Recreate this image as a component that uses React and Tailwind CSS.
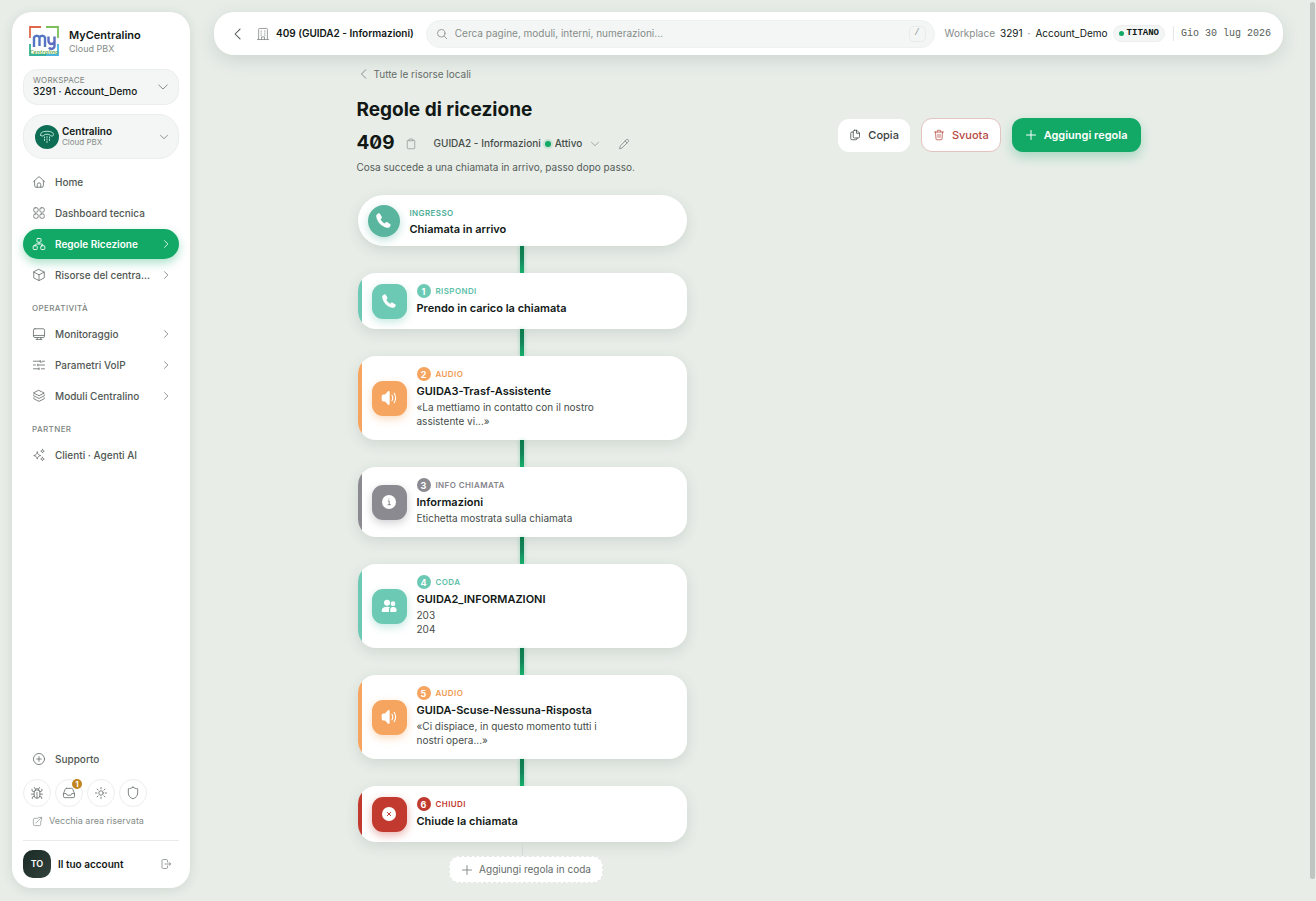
import React from "react";

const paths = {
  home: <><path d="M2.500 11.800 10.600 3.600a2 2 0 0 1 2.800 0l8.100 8.200" /><path d="M4.500 10v8.500A2.500 2.500 0 0 0 7 21h10a2.500 2.500 0 0 0 2.500-2.500V10" /><path d="M9 21v-4.500a3 3 0 0 1 6 0V21" /></>,
  grid: <><rect x="3" y="3" width="7.500" height="7.500" rx="2.500" /><rect x="13.500" y="3" width="7.500" height="7.500" rx="2.500" /><rect x="3" y="13.500" width="7.500" height="7.500" rx="2.500" /><rect x="13.500" y="13.500" width="7.500" height="7.500" rx="2.500" /></>,
  tree: <><rect x="8.500" y="2.500" width="7" height="6.500" rx="1.500" /><rect x="2" y="15" width="7" height="6.500" rx="1.500" /><rect x="15" y="15" width="7" height="6.500" rx="1.500" /><path d="M12 9v3M5.500 15v-1.500A1.500 1.500 0 0 1 7 12h10a1.500 1.500 0 0 1 1.500 1.500V15" /></>,
  cube: <><path d="M12 2.500 21 7v10L12 21.500 3 17V7z" /><path d="M3 7 12 11.700 21 7M12 11.700v9.800" /></>,
  monitor: <><rect x="2.500" y="3" width="19" height="15" rx="2.500" /><path d="M2.500 14.500h19M9 18v3M15 18v3M7 21.300h10" /></>,
  sliders: <><path d="M2.500 5.500H14M18 5.500h3.500M2.500 12H6M10 12h11.500M2.500 18.500H12M16 18.500h5.500" /><path d="M14 4v3h3M10 10.500v3M12 17v3" /></>,
  layers: <><path d="M12 2.500 21 7l-9 4.500L3 7z" /><path d="m3 10 0 1.700 9 4.500 9-4.500V10M3 15v1.700l9 4.500 9-4.500V15" /></>,
  sparkles: <><path d="M9 7c.8 3.800 2.200 5.200 6 6-3.800.8-5.200 2.200-6 6-.8-3.800-2.200-5.200-6-6 3.800-.8 5.200-2.200 6-6z" /><path d="M18 2.500c.4 1.900 1.100 2.600 3 3-1.900.4-2.600 1.100-3 3-.4-1.900-1.100-2.600-3-3 1.900-.4 2.600-1.100 3-3zM18 16c.4 1.900 1.100 2.600 3 3-1.900.4-2.600 1.100-3 3-.4-1.900-1.100-2.600-3-3 1.900-.4 2.600-1.100 3-3z" /></>,
  support: <><circle cx="12" cy="12" r="9.500" /><path d="M12 8v8M8 12h8" /></>,
  bug: <><path d="M7 11.500a5 5 0 0 1 10 0V16a5 5 0 0 1-10 0z" /><path d="M8.500 8a3.500 3.500 0 0 1 7 0M12 11v10M9 5 7.500 2.500M15 5l1.500-2.500M7 10 3.500 8.500V5.500M17 10l3.500-1.500V5.500M7 14H2.500M17 14h4.500M7.500 17.500 4 19v2.500M16.500 17.500 20 19v2.500" /></>,
  inbox: <><path d="M7.500 4h9a2 2 0 0 1 1.900 1.300L21.500 13v4.500a2.500 2.500 0 0 1-2.500 2.500H5a2.500 2.500 0 0 1-2.500-2.500V13l3.100-7.700A2 2 0 0 1 7.500 4z" /><path d="M2.500 13h4.700l1.600 2.800h6.400l1.600-2.800h4.700" /></>,
  sun: <><circle cx="12" cy="12" r="3.800" /><path d="M12 2.500v2.500M12 19v2.500M2.500 12H5M19 12h2.500M5.300 5.300 7 7M17 17l1.700 1.700M18.700 5.300 17 7M7 17l-1.700 1.700" /></>,
  shield: <path d="M12 2c2.300 1.700 5 2.600 8 2.700V12c0 5-3.200 8.300-8 10-4.800-1.700-8-5-8-10V4.700C7 4.600 9.700 3.700 12 2z" />,
  external: <><path d="M13 5H6a3 3 0 0 0-3 3v10a3 3 0 0 0 3 3h10a3 3 0 0 0 3-3v-7M8.500 15.500 21 3M14.500 3H21v6.500" /></>,
  logout: <path d="M15 8V5.500A2.500 2.500 0 0 0 12.500 3h-6A2.500 2.500 0 0 0 4 5.500v13A2.500 2.500 0 0 0 6.500 21h6a2.500 2.500 0 0 0 2.500-2.500V16M10 12h11.500M18.500 9l3 3-3 3" />,
  right: <path d="m8.500 4 8 8-8 8" />,
  left: <path d="m15.500 3.500-8.500 8.500 8.500 8.500" />,
  down: <path d="m3.500 8 8.500 8 8.500-8" />,
  building: <><path d="M4.500 21.500V4A1.500 1.500 0 0 1 6 2.500h12A1.500 1.500 0 0 1 19.500 4v17.500M2.500 21.500h19M9.500 21.500V17h5v4.500" /><path d="M8.500 7h1M14.500 7h1M8.500 10.500h1M14.500 10.500h1M8.500 14h1M14.500 14h1" /></>,
  search: <><circle cx="10.500" cy="10.500" r="7.500" /><path d="m16 16 5.500 5.500" /></>,
  clipboard: <><path d="M8 4.500H6A1.500 1.500 0 0 0 4.500 6v14A1.500 1.500 0 0 0 6 21.500h12a1.500 1.500 0 0 0 1.500-1.500V6A1.500 1.500 0 0 0 18 4.500h-2" /><path d="M8 3.500A1.500 1.500 0 0 1 9.500 2h5A1.500 1.500 0 0 1 16 3.500v2H8z" /></>,
  pencil: <path d="M16.500 3.500a2.500 2.500 0 0 1 4 4L8 20l-5 1.500L4.500 16.500zM14 6l4 4" />,
  copy: <><path d="M11 2.500h4.500L21 8v7.500a2.500 2.500 0 0 1-2.500 2.500h-7.500A2.500 2.500 0 0 1 8.500 15.500V5A2.500 2.500 0 0 1 11 2.500z" /><path d="M15 2.500V8.500h6M8.500 6H6a2.500 2.500 0 0 0-2.500 2.500V19A2.500 2.500 0 0 0 6 21.500h7.500A2.500 2.500 0 0 0 16 19v-1" /></>,
  trash: <path d="M3 6h18M8.500 6V4A1.500 1.500 0 0 1 10 2.500h4A1.500 1.500 0 0 1 15.500 4v2M5 6l1 14a1.600 1.600 0 0 0 1.600 1.500h8.800A1.600 1.600 0 0 0 18 20l1-14M10 10.500V17M14 10.500V17" />,
  plus: <path d="M12 3v18M3 12h18" />,
};

function Icon({ name, className = "size-3.5", sw = 1.5 }) {
  return (
    <svg viewBox="0 0 24 24" fill="none" stroke="currentColor" strokeWidth={sw} strokeLinecap="round" strokeLinejoin="round" className={`shrink-0 ${className}`} aria-hidden="true">
      {paths[name]}
    </svg>
  );
}

function Logo() {
  return (
    <svg viewBox="0 0 30 30" className="size-[30px] shrink-0" fill="none" role="img" aria-label="MyCentralino">
      <path d="M1 12V1H12" stroke="#e0684a" strokeWidth="1.800" />
      <path d="M17 1H29V12" stroke="#7cbf5a" strokeWidth="1.800" />
      <path d="M29 18V29H17" stroke="#48b4dc" strokeWidth="1.800" />
      <path d="M1 18V29H17" stroke="#35b39a" strokeWidth="1.800" />
      <path d="M5 21V11.500a3 3 0 0 1 5.500 0V20M10.500 11.500a3 3 0 0 1 5.500 0V21" stroke="#5474c4" strokeWidth="2.400" />
      <path d="M19.500 10.500V15a3 3 0 0 0 6 0V10.500M25.500 15v5a3 3 0 0 1-5.500 1.500" stroke="#5c6fc0" strokeWidth="2.400" />
      <text x="15" y="28" textAnchor="middle" fontSize="6" fontStyle="italic" fontWeight="600" fill="#56a63c" fontFamily="Open Sans, sans-serif">Centralino</text>
    </svg>
  );
}

function NavRow({ icon, label, arrow, active }) {
  return (
    <a
      href="#"
      aria-current={active ? "page" : undefined}
      className={`flex h-[30px] items-center gap-[9px] rounded-full pr-2 pl-[9px] text-[10px] ${active ? "bg-[#12a866] font-semibold text-white shadow-[0_4px_10px_rgba(18,168,102,0.35)]" : "font-medium text-[#505753]"}`}
    >
      <Icon name={icon} className={active ? "size-3.5 text-white" : "size-3.5 text-[#6f7672]"} />
      <span className="min-w-0 flex-1 whitespace-nowrap">{label}</span>
      {arrow && <Icon name="right" className={active ? "size-2.5" : "size-2.5 text-[#7b827e]"} sw={2} />}
    </a>
  );
}

function SectionLabel({ children }) {
  return <h2 className="px-[9px] pt-[9px] pb-0.5 text-[8px] leading-4 font-medium tracking-wider text-[#7d8480]">{children}</h2>;
}

function RoundButton({ icon, label, badge }) {
  return (
    <button type="button" aria-label={label} className="relative flex size-7 items-center justify-center rounded-full border border-[#eceeed] bg-white text-[#6f7672]">
      <Icon name={icon} />
      {badge && <span className="absolute -top-px right-0 flex size-2.5 items-center justify-center rounded-full bg-[#c08420] text-[8px] leading-none font-bold text-white">{badge}</span>}
    </button>
  );
}

function Sidebar() {
  return (
    <aside className="sticky top-3 flex h-[calc(100vh-25px)] w-[178px] shrink-0 flex-col rounded-[20px] bg-white px-[11px] pt-3.5 pb-2.5 shadow-[0_2px_12px_rgba(30,60,45,0.12)]">
      <div className="flex items-center gap-2.5 pl-1.5">
        <Logo />
        <div>
          <div className="text-[11px] leading-4 font-semibold text-[#111815]">MyCentralino</div>
          <div className="text-[9px] leading-3 text-[#858c88]">Cloud PBX</div>
        </div>
      </div>
      <button type="button" className="mt-[13px] flex h-9 items-center justify-between rounded-[14px] border border-[#eceeed] bg-[#f4f6f5] px-[9px] text-left">
        <span className="pb-0.5">
          <span className="block text-[8px] leading-2.5 tracking-wide text-[#7d8480]">WORKSPACE</span>
          <span className="block text-[10px] leading-3 font-medium text-[#111815]">3291 · Account_Demo</span>
        </span>
        <Icon name="down" className="size-3 text-[#7b827e]" sw={1.8} />
      </button>
      <button type="button" className="mt-[9px] flex h-[45px] items-center rounded-[20px] border border-[#eceeed] bg-[#f4f6f5] pr-[9px] pl-[11px] text-left">
        <svg viewBox="0 0 24 24" className="size-6 shrink-0" fill="none" stroke="#c8efe0" strokeLinecap="round" aria-hidden="true">
          <circle cx="12" cy="12" r="12" fill="#0d6e55" stroke="none" />
          <path d="M5.800 10.500c-.8-1.500 0-4.200 6.200-4.200s7 2.700 6.200 4.200c-.6.900-3.300.6-3.400-.6-.1-.9-5.500-.9-5.600 0-.1 1.200-2.800 1.500-3.400.6z" strokeWidth=".9" />
          <path d="M9.500 12v4M12 11.500V19M14.500 12v4" strokeWidth=".9" strokeDasharray="1 1.500" />
        </svg>
        <span className="ml-[3px] flex-1 pb-0.5">
          <span className="block text-[10px] leading-3 font-semibold text-[#111815]">Centralino</span>
          <span className="block text-[8px] leading-2.5 text-[#858c88]">Cloud PBX</span>
        </span>
        <Icon name="down" className="size-2.5 text-[#7b827e]" sw={2} />
      </button>
      <nav className="mt-2 flex flex-col gap-px">
        <NavRow icon="home" label="Home" />
        <NavRow icon="grid" label="Dashboard tecnica" />
        <NavRow icon="tree" label="Regole Ricezione" arrow active />
        <NavRow icon="cube" label="Risorse del centra..." arrow />
        <SectionLabel>OPERATIVITÀ</SectionLabel>
        <NavRow icon="monitor" label="Monitoraggio" arrow />
        <NavRow icon="sliders" label="Parametri VoIP" arrow />
        <NavRow icon="layers" label="Moduli Centralino" arrow />
        <SectionLabel>PARTNER</SectionLabel>
        <NavRow icon="sparkles" label="Clienti · Agenti AI" />
      </nav>
      <div className="mt-auto">
        <NavRow icon="support" label="Supporto" />
        <div className="mt-[5px] flex gap-1">
          <RoundButton icon="bug" label="Segnala un problema" />
          <RoundButton icon="inbox" label="Notifiche" badge="1" />
          <RoundButton icon="sun" label="Tema" />
          <RoundButton icon="shield" label="Sicurezza" />
        </div>
        <a href="#" className="mt-1.5 flex items-center gap-1.5 pl-[9px] text-[9px] leading-4 text-[#858c88]">
          <Icon name="external" className="size-[11px]" />
          Vecchia area riservata
        </a>
        <div className="mt-[11px] flex items-center gap-[7px] border-t border-[#e9ebea] pt-[9px]">
          <span className="flex size-7 items-center justify-center rounded-[10px] bg-linear-to-br from-[#1a2a24] to-[#33423c] text-[9px] font-semibold text-white">TO</span>
          <span className="flex-1 text-[10px] font-semibold text-[#111815]">Il tuo account</span>
          <button type="button" aria-label="Esci" className="pr-[7px] text-[#7b827e]"><Icon name="logout" className="size-3" /></button>
        </div>
      </div>
    </aside>
  );
}

function TopBar() {
  return (
    <header className="flex h-[43px] items-center rounded-[20px] bg-white pr-3 pl-[17px] text-[10px] shadow-[0_5px_18px_rgba(30,60,45,0.13)]">
      <button type="button" aria-label="Indietro" className="text-[#4d5450]"><Icon name="left" className="size-3.5" sw={1.8} /></button>
      <Icon name="building" className="ml-[11px] size-3.5 text-[#7b827e]" sw={1.3} />
      <span className="ml-1.5 text-[10px] font-semibold whitespace-nowrap text-[#111815]">409 (GUIDA2 - Informazioni)</span>
      <label className="ml-3 flex h-7 min-w-0 flex-1 items-center rounded-[14px] border border-[#eff1f0] bg-[#f4f6f5] pr-2 pl-[9px]">
        <Icon name="search" className="size-3 text-[#7b827e]" />
        <input type="search" aria-label="Cerca" placeholder="Cerca pagine, moduli, interni, numerazioni..." className="ml-[7px] min-w-0 flex-1 bg-transparent text-[10px] outline-none placeholder:text-[#858c88]" />
        <kbd className="flex h-4 w-[17px] items-center justify-center rounded-[5px] border border-[#e9ebea] font-['Liberation_Mono',monospace] text-[9px] text-[#8f9692]">/</kbd>
      </label>
      <div className="ml-2.5 flex items-center whitespace-nowrap text-[#111815]">
        <span className="text-[#858c88]">Workplace</span>
        <span className="ml-[5px]">3291</span>
        <span className="mx-[5px] text-[#858c88]">·</span>
        <span>Account_Demo</span>
        <span className="ml-[5px] flex h-[17px] items-center gap-[3px] rounded-full border border-[#eceeed] bg-[#f4f6f5] px-[5px] font-['Liberation_Mono',monospace] text-[9px] font-bold">
          <span className="size-[5px] rounded-full bg-[#12a866]" />TITANO
        </span>
        <time className="ml-2 border-l border-[#e4e7e5] pl-[7px] font-['Liberation_Mono',monospace] text-[10px] text-[#555c58]">Gio 30 lug 2026</time>
      </div>
    </header>
  );
}

const glyphs = {
  phone: <path fill="currentColor" d="M7.200 2.800c-.6-.9-1.700-1.200-2.600-.6L3 3.300C1.900 4.100 1.600 5.500 1.900 7c1.500 7.500 7.600 13.600 15.100 15.100 1.500.3 2.900 0 3.700-1.100l1.100-1.600c.6-.9.300-2-.6-2.600l-3.800-2.300c-.8-.5-1.700-.3-2.300.3l-1.300 1.300c-2.500-1.200-4.700-3.400-5.900-5.900l1.300-1.300c.6-.6.8-1.500.3-2.300z" />,
  audio: <><path fill="currentColor" d="M13 3.200v17.600c0 1.300-1.400 2-2.500 1.200L6 17.300H3.500A2.500 2.500 0 0 1 1 14.800V9.200a2.500 2.500 0 0 1 2.500-2.500H6L10.500 2c1.100-.8 2.500-.1 2.500 1.200z" /><path d="M16.500 8c1.300 2.300 1.300 5.700 0 8M19.800 5c2.400 4 2.400 10 0 14" fill="none" stroke="currentColor" strokeWidth="1.700" strokeLinecap="round" /></>,
  info: <><circle cx="12" cy="12" r="10.500" fill="currentColor" /><path d="M10.800 10.500H12.300V16M10.500 16h3.800M12 7.500v.2" fill="none" stroke="#8b8a91" strokeWidth="1.500" strokeLinecap="round" /></>,
  people: <><circle cx="9" cy="7" r="4.500" fill="currentColor" /><circle cx="18" cy="8.500" r="3.500" fill="currentColor" /><path fill="currentColor" d="M1 19c0-4 3.200-6 8-6 1.800 0 3.200.3 4.500.9-1.500 1.500-2 3.500-1.500 7.100H3.500C2 21 1 20.400 1 19zM14 21c-.6-5.500 1-7.500 4.500-7.500 3 0 5 1.700 5 5 0 1.500-1 2.500-2.500 2.500z" /></>,
  close: <><circle cx="12" cy="12" r="10.500" fill="currentColor" /><path d="m9.500 9.500 5 5m0-5-5 5" stroke="#c23a2f" strokeWidth="1.500" strokeLinecap="round" /></>,
};

function Glyph({ name, className = "size-4" }) {
  return <svg viewBox="0 0 24 24" className={`text-white ${className}`} aria-hidden="true">{glyphs[name]}</svg>;
}

const tones = {
  teal: { bg: "bg-[#6cc9b3]", text: "text-[#5dc0a9]", glow: "shadow-[0_3px_9px_rgba(108,201,179,0.4)]" },
  orange: { bg: "bg-[#f5a55f]", text: "text-[#f09a50]", glow: "shadow-[0_3px_9px_rgba(245,165,95,0.4)]" },
  gray: { bg: "bg-[#8b8a91]", text: "text-[#85848b]", glow: "shadow-[0_3px_9px_rgba(139,138,145,0.4)]" },
  red: { bg: "bg-[#c23a2f]", text: "text-[#c23a2f]", glow: "shadow-[0_3px_9px_rgba(194,58,47,0.4)]" },
};

const steps = [
  { kind: "RISPONDI", title: "Prendo in carico la chiamata", icon: "phone", tone: "teal" },
  { kind: "AUDIO", title: "GUIDA3-Trasf-Assistente", lines: ["«La mettiamo in contatto con il nostro", "assistente vi...»"], icon: "audio", tone: "orange" },
  { kind: "INFO CHIAMATA", title: "Informazioni", lines: ["Etichetta mostrata sulla chiamata"], icon: "info", tone: "gray" },
  { kind: "CODA", title: "GUIDA2_INFORMAZIONI", lines: ["203", "204"], icon: "people", tone: "teal" },
  { kind: "AUDIO", title: "GUIDA-Scuse-Nessuna-Risposta", lines: ["«Ci dispiace, in questo momento tutti i", "nostri opera...»"], icon: "audio", tone: "orange" },
  { kind: "CHIUDI", title: "Chiude la chiamata", icon: "close", tone: "red" },
];

function Connector() {
  return <div className="mx-auto h-[27px] w-1 bg-linear-to-b from-[#0b7a4b] via-[#14855a] to-[#17b36f] shadow-[0_0_4px_rgba(18,168,102,0.35)]" />;
}

function StepCard({ step, index }) {
  const tone = tones[step.tone];
  return (
    <article className="flex overflow-hidden rounded-[18px] bg-white shadow-[0_4px_14px_rgba(30,60,45,0.12)]">
      <div className={`w-1 shrink-0 ${tone.bg}`} />
      <div className="flex items-center gap-2.5 py-2.5 pl-2.5">
        <div className={`flex size-[35px] shrink-0 items-center justify-center rounded-[11px] ${tone.bg} ${tone.glow}`}>
          <Glyph name={step.icon} />
        </div>
        <div className="pb-0.5">
          <div className="flex h-4 items-center gap-[5px]">
            <span className={`flex size-3.5 items-center justify-center rounded-full text-[9px] leading-none font-bold text-white ${tone.bg}`}>{index + 1}</span>
            <span className={`text-[8px] font-semibold tracking-wider ${tone.text}`}>{step.kind}</span>
          </div>
          <h3 className="text-[11px] leading-[18px] font-semibold text-[#111815]">{step.title}</h3>
          {step.lines && step.lines.map((line) => <p key={line} className="text-[10px] leading-3.5 text-[#454c48]">{line}</p>)}
        </div>
      </div>
    </article>
  );
}

export default function App() {
  return (
    <div className="relative flex min-h-screen items-start gap-6 bg-[#e8ede8] py-3 pr-[33px] pl-3 font-['Inter','Liberation_Sans',sans-serif] leading-normal">
      <Sidebar />
      <div className="min-w-0 flex-1">
        <TopBar />
        <main className="mx-auto max-w-[784px]">
          <a href="#" className="mt-[11px] flex w-fit items-center gap-1 pl-px text-[10px] leading-4 text-[#656c68]">
            <Icon name="left" className="size-3" />
            Tutte le risorse locali
          </a>
          <div className="mt-3.5 flex items-start justify-between">
            <div>
              <h1 className="text-[19px] leading-7 font-bold text-[#111815]">Regole di ricezione</h1>
              <div className="mt-1.5 flex h-[27px] items-center text-[10px] font-medium text-[#454c48]">
                <span className="text-[19px] font-bold text-[#111815] [font-feature-settings:'zero']">409</span>
                <button type="button" aria-label="Copia numero" className="ml-2.5 text-[#8f9692]"><Icon name="clipboard" className="size-3" /></button>
                <span className="ml-[17px]">GUIDA2 - Informazioni</span>
                <button type="button" className="ml-1 flex items-center gap-1">
                  <span className="size-1.5 rounded-full bg-[#12a866] shadow-[0_0_0_2px_rgba(18,168,102,0.15)]" />
                  Attivo
                  <Icon name="down" className="ml-1 size-2.5 text-[#7b827e]" />
                </button>
                <button type="button" aria-label="Modifica" className="ml-[18px] text-[#7b827e]"><Icon name="pencil" className="size-3" /></button>
              </div>
              <p className="text-[10px] leading-5 text-[#555c58]">Cosa succede a una chiamata in arrivo, passo dopo passo.</p>
            </div>
            <div className="mt-[22px] flex items-center gap-[11px] text-[11px]">
              <button type="button" className="flex h-[33px] items-center gap-[7px] rounded-[11px] bg-white px-[11px] font-medium text-[#3a413d]"><Icon name="copy" className="size-3" />Copia</button>
              <button type="button" className="flex h-[34px] items-center gap-[7px] rounded-[11px] border border-[#e3c4c0] bg-white px-[11px] font-medium text-[#b5483f]"><Icon name="trash" className="size-3" />Svuota</button>
              <button type="button" className="flex h-[34px] items-center gap-[7px] rounded-[11px] bg-[#12a866] px-[13px] font-semibold text-white shadow-[0_5px_12px_rgba(18,168,102,0.3)]"><Icon name="plus" className="size-3" sw={2} />Aggiungi regola</button>
            </div>
          </div>
          <section className="mt-[18px] w-full max-w-[330px] pl-px">
            <article className="flex h-[51px] items-center gap-2.5 rounded-full bg-white pl-2.5 shadow-[0_4px_14px_rgba(30,60,45,0.12)]">
              <div className="flex size-8 items-center justify-center rounded-full bg-[#5ab59f] shadow-[0_3px_9px_rgba(90,181,159,0.4)]"><Glyph name="phone" className="size-[17px]" /></div>
              <div>
                <div className="text-[8px] leading-4 font-semibold tracking-wider text-[#4fae97]">INGRESSO</div>
                <h2 className="text-[11px] leading-4 font-semibold text-[#111815]">Chiamata in arrivo</h2>
              </div>
            </article>
            {steps.map((step, i) => (
              <React.Fragment key={step.title}>
                <Connector />
                <StepCard step={step} index={i} />
              </React.Fragment>
            ))}
            <div className="mx-auto h-3.5 w-px bg-[#d3dad5]" />
            <div className="flex justify-center pl-2">
              <button type="button" className="flex h-[27px] items-center gap-1.5 rounded-[10px] border border-dashed border-[#e4e8e5] bg-white px-[11px] text-[10px] text-[#656c68]"><Icon name="plus" className="size-3" />Aggiungi regola in coda</button>
            </div>
          </section>
        </main>
      </div>
      <div aria-hidden="true" className="absolute top-0.5 right-px bottom-[22px] w-[5px] rounded-full bg-[#bfc5c0]" />
    </div>
  );
}
